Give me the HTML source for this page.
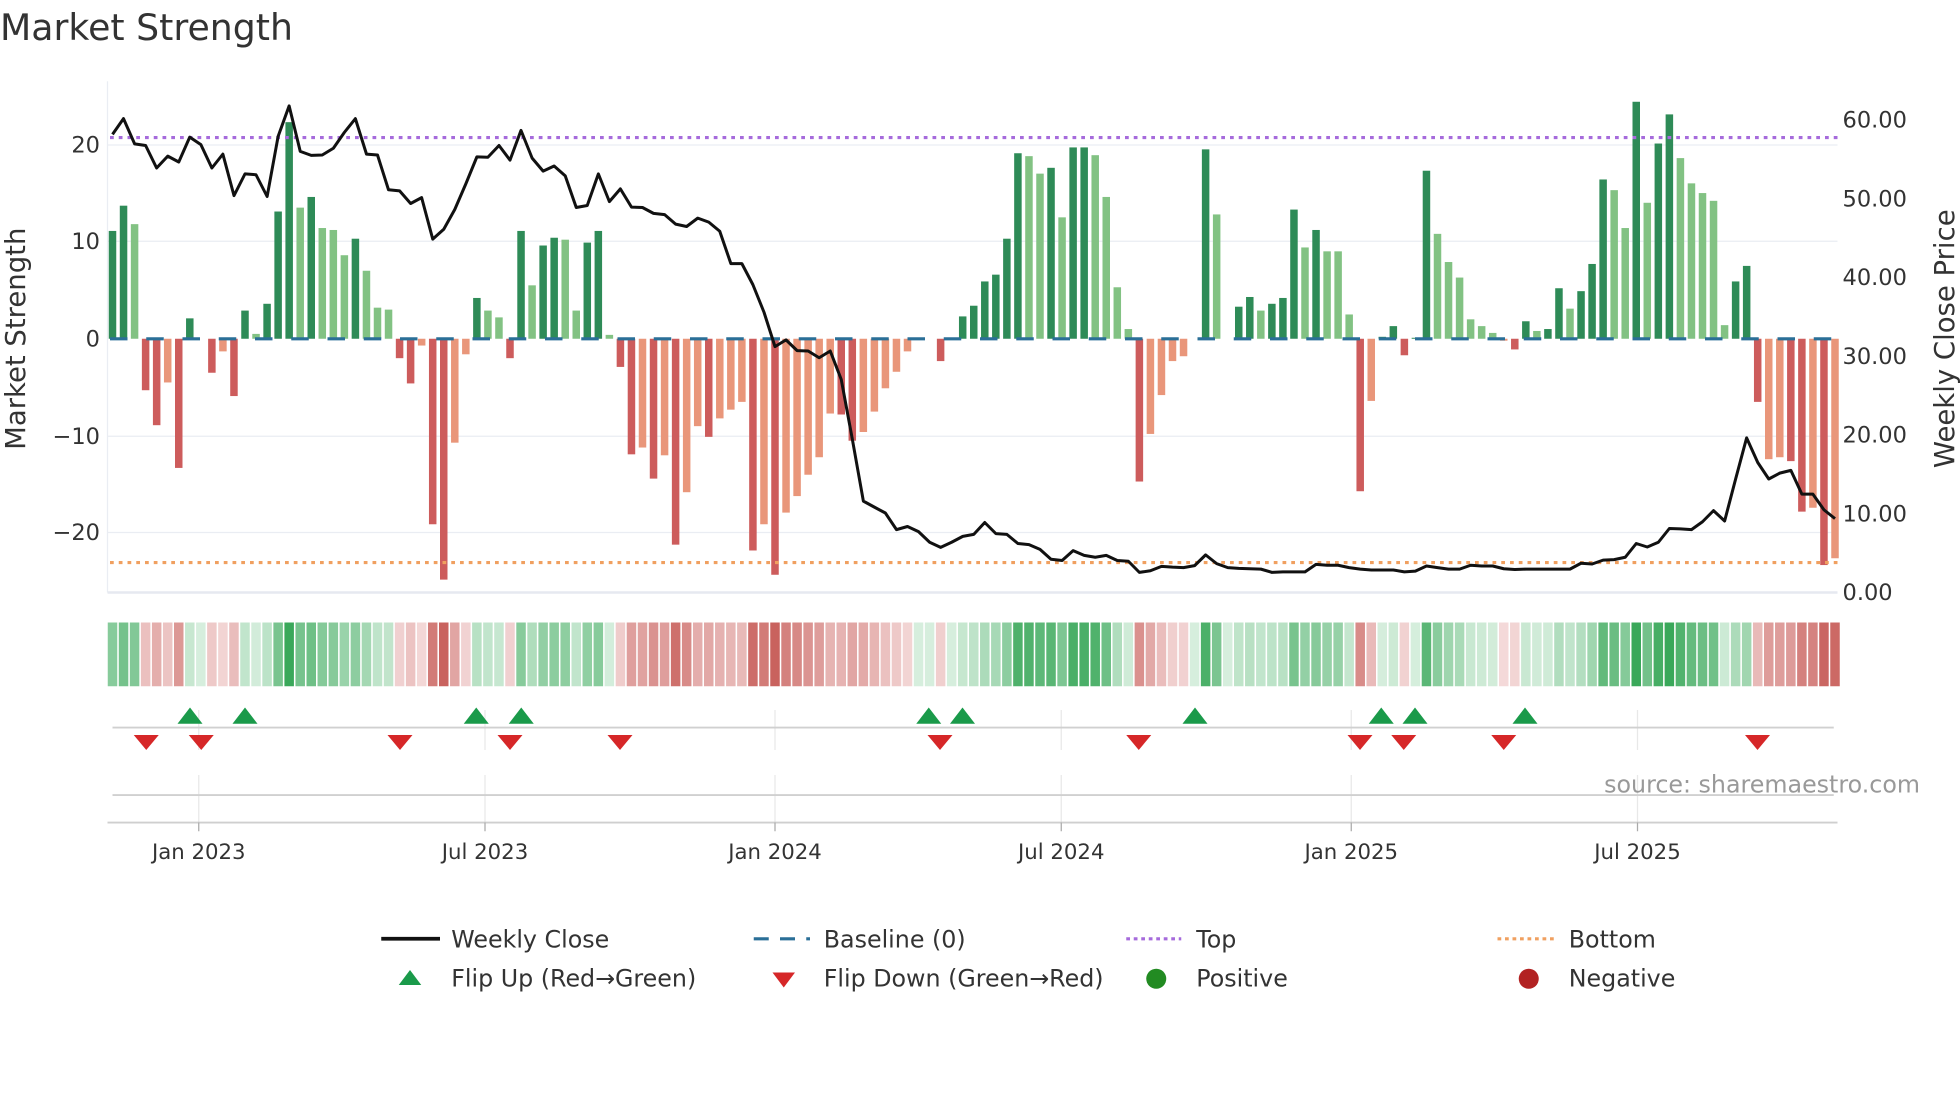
<!DOCTYPE html>
<html><head><meta charset="utf-8"><style>
html,body{margin:0;padding:0;background:#fff;}
svg{display:block;font-family:"DejaVu Sans","Liberation Sans",sans-serif;}
</style></head><body>
<svg id="s" width="1960" height="1102" viewBox="0 0 1568 881.6" xmlns="http://www.w3.org/2000/svg">
<text x="0" y="32" font-size="29" fill="#333">Market Strength</text>
<g stroke="#eaedf3" stroke-width="1">
<line x1="86" x2="1470" y1="116" y2="116"/><line x1="86" x2="1470" y1="193" y2="193"/>
<line x1="86" x2="1470" y1="349" y2="349"/><line x1="86" x2="1470" y1="426" y2="426"/>
<line x1="86" x2="86" y1="65" y2="474"/>
</g>
<line x1="86" x2="1470" y1="474" y2="474" stroke="#e6e9f0" stroke-width="2"/>
<g font-size="18" fill="#333" text-anchor="end">
<text x="80" y="122">20</text><text x="80" y="199">10</text><text x="80" y="277">0</text>
<text x="80" y="355">−10</text><text x="80" y="432">−20</text>
</g>
<g font-size="18" fill="#333">
<text x="1474" y="102">60.00</text><text x="1474" y="165">50.00</text><text x="1474" y="228">40.00</text>
<text x="1474" y="291">30.00</text><text x="1474" y="354">20.00</text><text x="1474" y="417">10.00</text>
<text x="1474" y="480">0.00</text>
</g>
<text transform="translate(20,271) rotate(-90)" text-anchor="middle" font-size="22" fill="#333">Market Strength</text>
<text transform="translate(1563,271) rotate(-90)" text-anchor="middle" font-size="22" fill="#333">Weekly Close Price</text>
<g id="bars"></g>
<line x1="88" x2="1470" y1="271" y2="271" stroke="#2a6f97" stroke-width="2.5" stroke-dasharray="14 15"/>
<line x1="88" x2="1470" y1="110" y2="110" stroke="#a66bdc" stroke-width="2.5" stroke-dasharray="3 4"/>
<line x1="88" x2="1470" y1="450" y2="450" stroke="#f0a060" stroke-width="2.5" stroke-dasharray="3 4"/>
<polyline id="pl" fill="none" stroke="#111" stroke-width="2.4" stroke-linejoin="round"/>
<g id="strip"></g>
<g stroke="#e8e8e8" stroke-width="1">
<line x1="159" x2="159" y1="568" y2="600"/><line x1="388" x2="388" y1="568" y2="600"/><line x1="620" x2="620" y1="568" y2="600"/><line x1="849" x2="849" y1="568" y2="600"/><line x1="1081" x2="1081" y1="568" y2="600"/><line x1="1310" x2="1310" y1="568" y2="600"/>
<line x1="159" x2="159" y1="620" y2="658"/><line x1="388" x2="388" y1="620" y2="658"/><line x1="620" x2="620" y1="620" y2="658"/><line x1="849" x2="849" y1="620" y2="658"/><line x1="1081" x2="1081" y1="620" y2="658"/><line x1="1310" x2="1310" y1="620" y2="658"/>
</g>
<line x1="90" x2="1467" y1="582" y2="582" stroke="#d0d0d0" stroke-width="1.5"/>
<line x1="90" x2="1467" y1="636" y2="636" stroke="#d0d0d0" stroke-width="1.5"/>
<line x1="86" x2="1470" y1="658" y2="658" stroke="#cfcfcf" stroke-width="1.5"/>
<g stroke="#aaa" stroke-width="1">
<line x1="159" x2="159" y1="658" y2="665"/><line x1="388" x2="388" y1="658" y2="665"/><line x1="620" x2="620" y1="658" y2="665"/><line x1="849" x2="849" y1="658" y2="665"/><line x1="1081" x2="1081" y1="658" y2="665"/><line x1="1310" x2="1310" y1="658" y2="665"/>
</g>
<g id="mk"></g>
<text x="1536" y="634" text-anchor="end" font-size="19" fill="#999">source: sharemaestro.com</text>
<g font-size="17" fill="#333" text-anchor="middle">
<text x="159" y="687">Jan 2023</text><text x="388" y="687">Jul 2023</text><text x="620" y="687">Jan 2024</text>
<text x="849" y="687">Jul 2024</text><text x="1081" y="687">Jan 2025</text><text x="1310" y="687">Jul 2025</text>
</g>
<g font-size="19" fill="#333">
<line x1="305" x2="352" y1="751" y2="751" stroke="#111" stroke-width="3"/>
<text x="361" y="758">Weekly Close</text>
<line x1="603" x2="648" y1="751" y2="751" stroke="#2a6f97" stroke-width="2.5" stroke-dasharray="12 9"/>
<text x="659" y="758">Baseline (0)</text>
<line x1="901" x2="945" y1="751" y2="751" stroke="#a66bdc" stroke-width="2.5" stroke-dasharray="3 3"/>
<text x="957" y="758">Top</text>
<line x1="1198" x2="1244" y1="751" y2="751" stroke="#f0a060" stroke-width="2.5" stroke-dasharray="3 3"/>
<text x="1255" y="758">Bottom</text>
<polygon points="319,788 337,788 328,776" fill="#1a9a4a"/>
<text x="361" y="789">Flip Up (Red→Green)</text>
<polygon points="618,778 636,778 627,790" fill="#d62728"/>
<text x="659" y="789">Flip Down (Green→Red)</text>
<circle cx="925" cy="783" r="8" fill="#228b22"/>
<text x="957" y="789">Positive</text>
<circle cx="1223" cy="783" r="8" fill="#b22222"/>
<text x="1255" y="789">Negative</text>
</g>
</svg>
<script>
var V=[11.1,13.7,11.8,-5.3,-8.9,-4.5,-13.3,2.1,0,-3.5,-1.3,-5.9,2.9,0.5,3.6,13.1,22.3,13.5,14.6,11.4,11.2,8.6,10.3,7.0,3.2,3.0,-2.0,-4.6,-0.7,-19.1,-24.8,-10.7,-1.6,4.2,2.9,2.2,-2.0,11.1,5.5,9.6,10.4,10.2,2.9,9.9,11.1,0.4,-2.9,-11.9,-11.2,-14.4,-12.0,-21.2,-15.8,-9.0,-10.1,-8.2,-7.3,-6.5,-21.8,-19.1,-24.3,-17.9,-16.2,-14.0,-12.2,-7.7,-7.8,-10.5,-9.6,-7.5,-5.1,-3.4,-1.3,0,0,-2.3,0,2.3,3.4,5.9,6.6,10.3,19.1,18.8,17.0,17.6,12.5,19.7,19.7,18.9,14.6,5.3,1.0,-14.7,-9.8,-5.8,-2.3,-1.8,0,19.5,12.8,0,3.3,4.3,2.9,3.6,4.2,13.3,9.4,11.2,9.0,9.0,2.5,-15.7,-6.4,0.2,1.3,-1.7,0.1,17.3,10.8,7.9,6.3,2.0,1.3,0.6,-0.2,-1.1,1.8,0.8,1.0,5.2,3.1,4.9,7.7,16.4,15.3,11.4,24.4,14.0,20.1,23.1,18.6,16.0,15.0,14.2,1.4,5.9,7.5,-6.5,-12.4,-12.2,-12.6,-17.8,-17.4,-23.3,-22.6];
var C="DDLRRORDLR"+"ORDLDDDLDL"+"LLDLLLRROR"+"ROODLLRDLD"+"DLLDDLRROR"+"OROOROOORO"+"ROOOOORROO"+"OOOOORODDD"+"DDDLLDLDDL"+"LLLROOOOOD"+"LLDDLDDDLD"+"LLLRODDRDD"+"LLLLLLORDL"+"DDLDDDLLDL"+"DDLLLLLDDR"+"OORRORO";
var col={D:"#2e8b57",L:"#82c283",R:"#cd5c5c",O:"#e9967a"};
var L1=[340,300,364,368,425,395,410,347,366,425,390,495,440,442,497,345,268,383,393,392,375,335,300,390,392,480,483,515,500,605,580,530,465,397,398,368,405,330,400,433,420,445,525,520,440,510,478,524,525,540,543,567,573,552,562,585,667,667,720,790,877,860,887,888,905,888,960,1110,1268,1283,1298,1340,1332,1345,1372,1385,1372,1357,1352];
var L2=[1322,1350,1352,1375,1378,1390,1415,1418,1393,1405,1410,1405,1418,1420,1448,1444,1433,1435,1436,1431,1404,1426,1436,1438,1439,1440,1448,1447,1447,1447,1428,1430,1430,1436,1440,1442,1442,1442,1447,1445,1432,1436,1440,1440,1430,1432,1432,1439,1441,1440,1440,1440,1440,1440,1425,1427,1417,1416,1410,1375,1384,1372,1337,1338,1340,1320,1292,1318,1212,1108,1170,1212,1197,1190,1250,1250,1290,1312];
var LY=L1.concat(L2);
var NS="http://www.w3.org/2000/svg";
function el(t,a,p){var e=document.createElementNS(NS,t);for(var k in a)e.setAttribute(k,a[k]);p.appendChild(e);return e;}
var bars=document.getElementById("bars"),strip=document.getElementById("strip");
function hx(h){return [parseInt(h.substr(1,2),16),parseInt(h.substr(3,2),16),parseInt(h.substr(5,2),16)];}
function mix(a,b,t){a=hx(a);b=hx(b);return "rgb("+[0,1,2].map(function(i){return Math.round(a[i]+(b[i]-a[i])*t);}).join(",")+")";}
var pts=[];
var n=V.length;
for(var i=0;i<n;i++){
 var x=90+i*(1378/(n-1));
 var v=V[i],y0=271,h=v*7.77;
 if(Math.abs(h)>0.3) el("rect",{x:x-3,y:h>0?y0-h:y0,width:6,height:Math.abs(h),fill:col[C[i]]||"#82c283"},bars);
 var sc=v>=0?mix("#d6eedd","#3aa85a",Math.min(v/22,1)):mix("#f4dada","#c9625e",Math.min(-v/24,1));
 el("rect",{x:x-3.8,y:498,width:7.6,height:51,fill:sc},strip);
 if(i<LY.length) pts.push(x.toFixed(1)+","+(LY[i]*0.3162).toFixed(1));
}
document.getElementById("pl").setAttribute("points",pts.join(" "));
var mk=document.getElementById("mk");
[152,196,381,417,743,770,956,1105,1132,1220].forEach(function(x){el("polygon",{points:(x-10)+",579 "+(x+10)+",579 "+x+",566",fill:"#1a9a4a"},mk);});
[117,161,320,408,496,752,911,1088,1123,1203,1406].forEach(function(x){el("polygon",{points:(x-10)+",588 "+(x+10)+",588 "+x+",600",fill:"#d62728"},mk);});
</script>
</body></html>
